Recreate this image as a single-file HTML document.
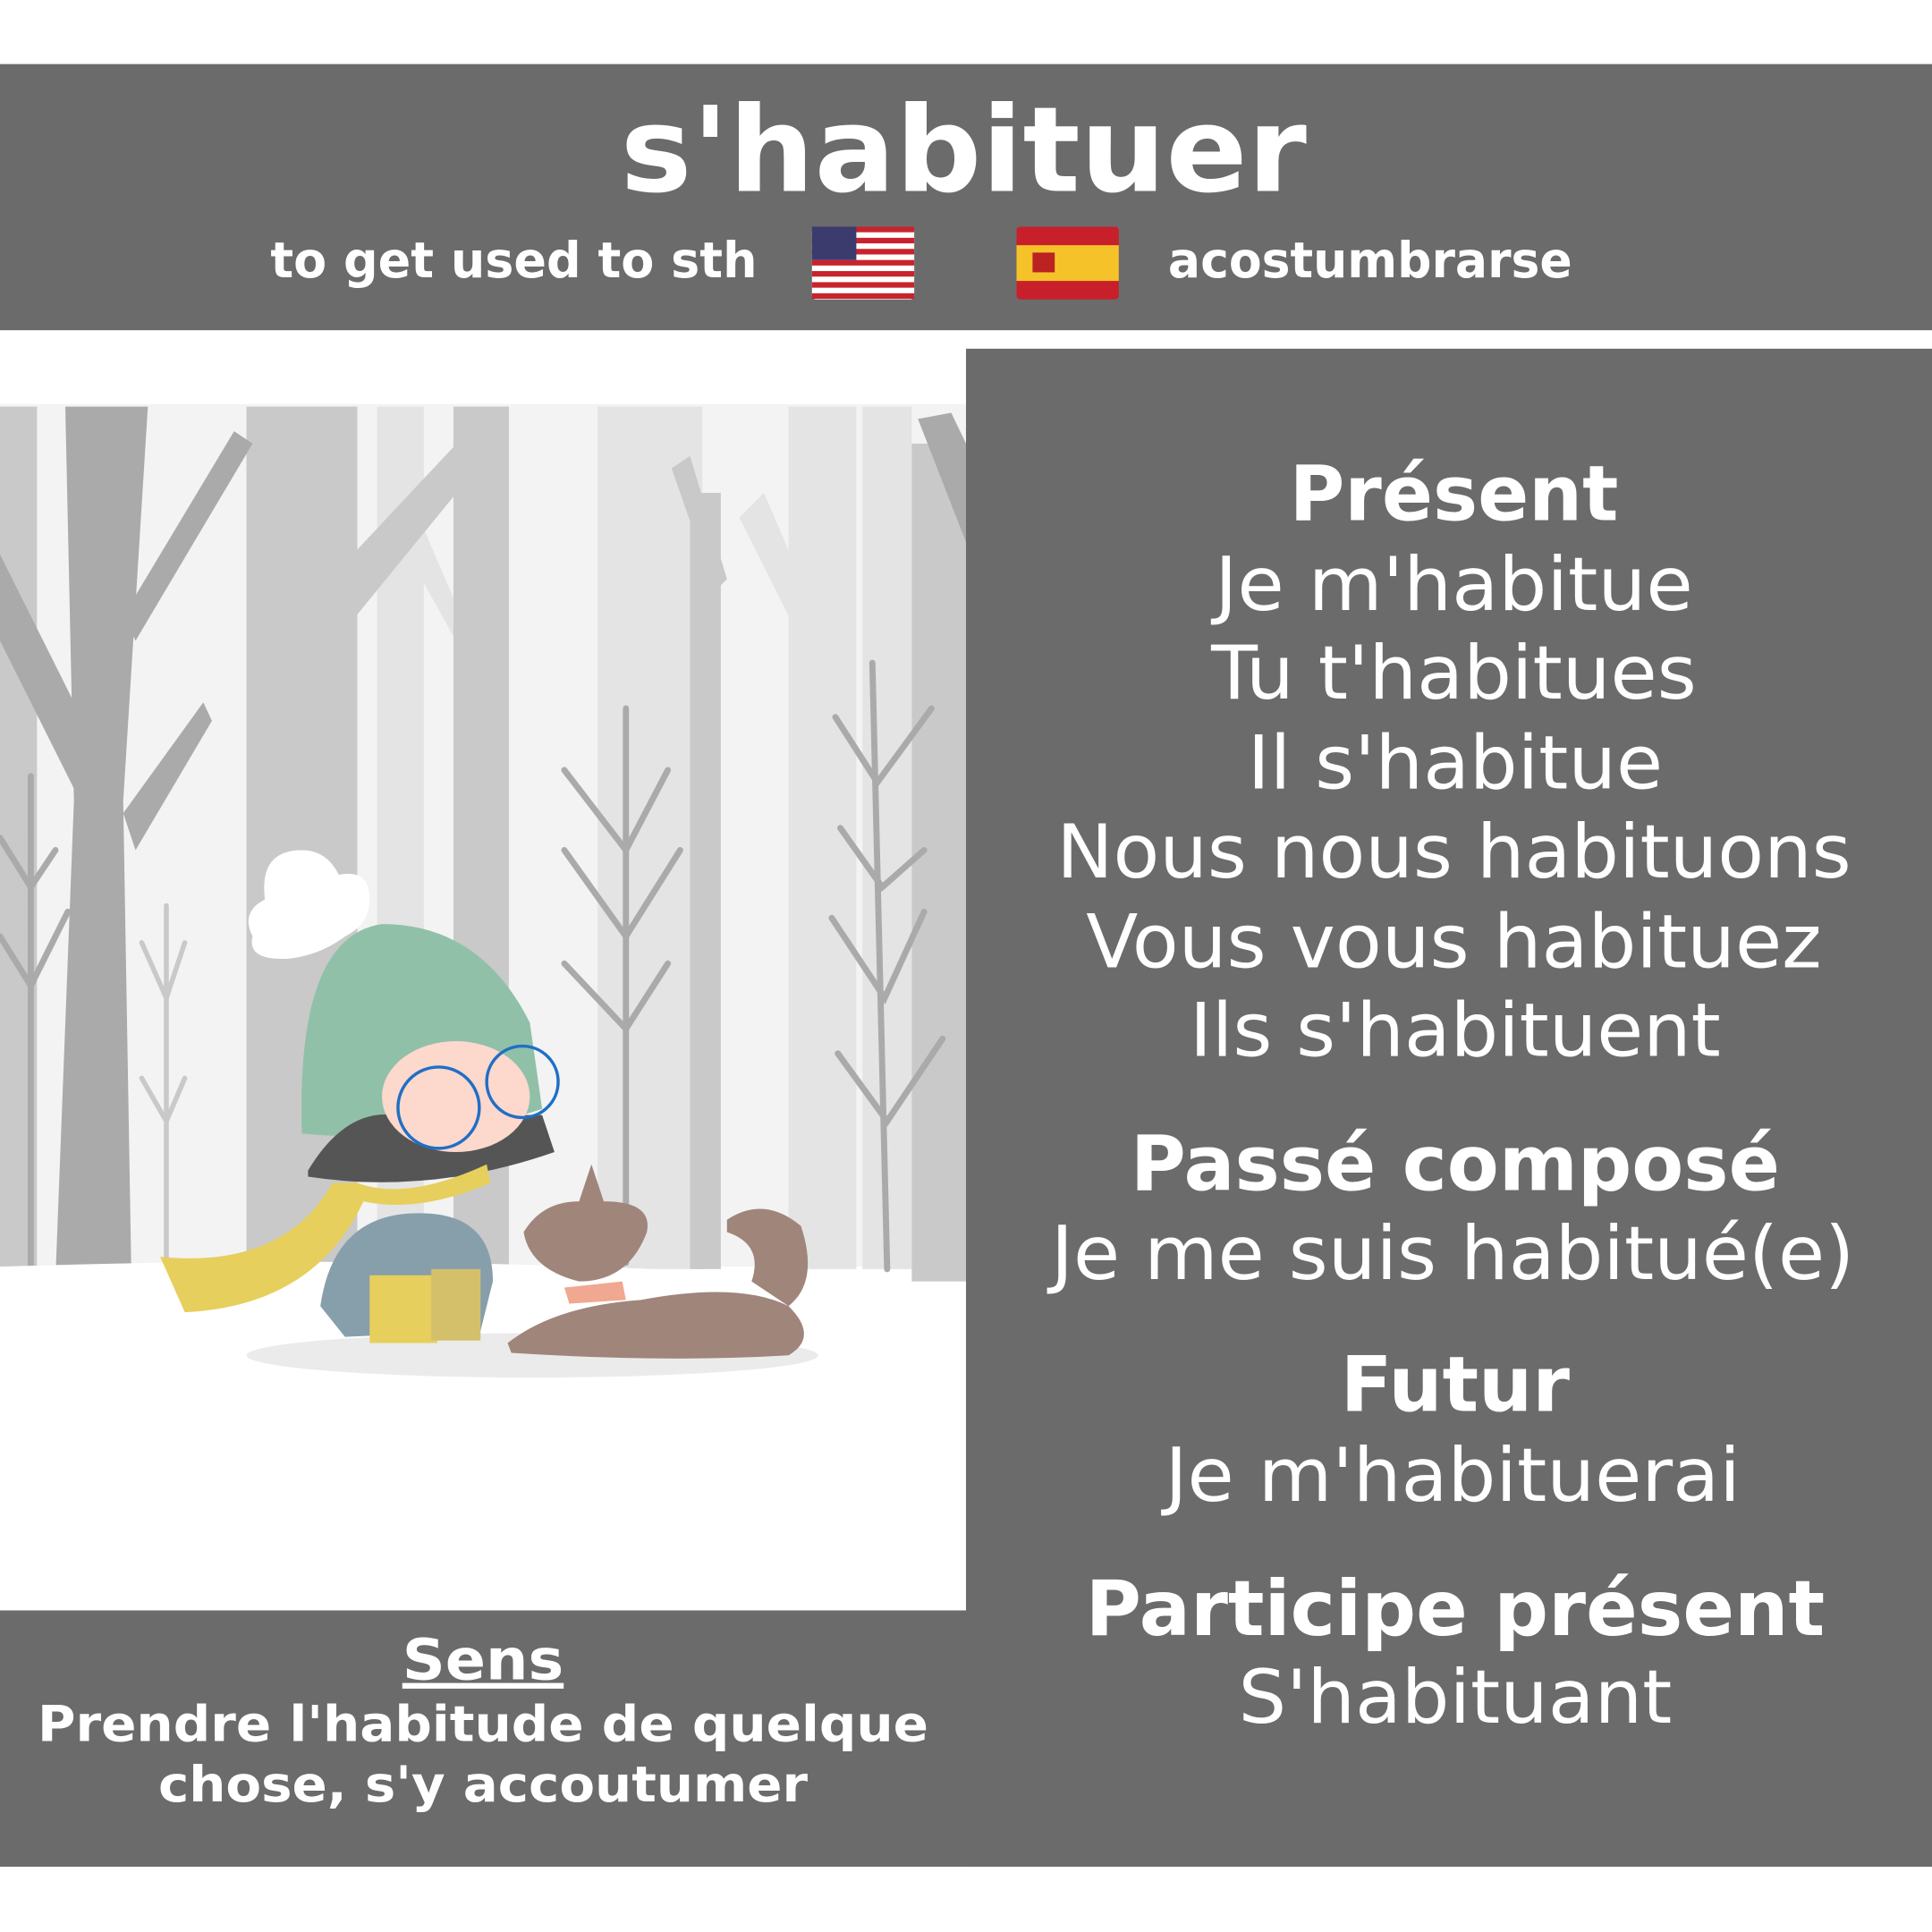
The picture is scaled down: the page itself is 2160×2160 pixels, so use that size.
<!DOCTYPE html>
<html><head><meta charset="utf-8"><style>
html,body{margin:0;padding:0;background:#fff}
svg{display:block}
text{font-family:"DejaVu Sans","Liberation Sans",sans-serif;fill:#fff}
.b{font-weight:bold}
</style></head><body>
<svg width="2160" height="2160" viewBox="0 0 1568 1568" xmlns="http://www.w3.org/2000/svg">
<rect width="1568" height="1568" fill="#fff"/>
<!-- header -->
<rect x="0" y="52" width="1568" height="216" fill="#6b6b6b"/>
<text class="b" x="782" y="155" font-size="96" text-anchor="middle" textLength="557" lengthAdjust="spacingAndGlyphs">s'habituer</text>
<text class="b" x="417" y="225" font-size="40" text-anchor="middle" textLength="395" lengthAdjust="spacingAndGlyphs">to get used to sth</text>
<text class="b" x="1112" y="225" font-size="40" text-anchor="middle" textLength="328" lengthAdjust="spacingAndGlyphs">acostumbrarse</text>
<!-- US flag -->
<g>
<rect x="659" y="184" width="83" height="59" rx="3" fill="#fff"/>
<g fill="#c8232c">
<rect x="659" y="184" width="83" height="4.5"/><rect x="659" y="193" width="83" height="4.5"/><rect x="659" y="202" width="83" height="4.5"/><rect x="659" y="211" width="83" height="4.5"/><rect x="659" y="220" width="83" height="4.5"/><rect x="659" y="229" width="83" height="4.5"/><rect x="659" y="238" width="83" height="4.5"/>
</g>
<rect x="659" y="184" width="36" height="27" fill="#3c3b6e"/>
</g>
<!-- Spain flag -->
<rect x="825" y="184" width="83" height="59" rx="3" fill="#c8202a"/>
<rect x="825" y="199" width="83" height="29" fill="#f6c22a"/>
<rect x="838" y="205" width="18" height="16" fill="#b22" />
<!-- illustration -->
<rect x="0" y="328" width="784" height="979" fill="#fff"/>
<rect x="0" y="328" width="784" height="700" fill="#f3f3f3"/>
<g fill="#e4e4e4">
<rect x="306" y="330" width="38" height="700"/>
<rect x="485" y="330" width="85" height="700"/>
<rect x="640" y="330" width="55" height="700"/>
<rect x="700" y="330" width="40" height="700"/>
<polygon points="320,430 340,420 370,490 370,520"/>
<polygon points="600,420 620,400 650,470 640,500"/>
</g>
<g fill="#c9c9c9">
<rect x="200" y="330" width="90" height="700"/>
<rect x="368" y="330" width="45" height="700"/>
<rect x="560" y="400" width="25" height="630"/>
<rect x="740" y="360" width="44" height="680"/>
<rect x="0" y="330" width="30" height="700"/>
<polygon points="200,540 230,510 380,350 395,370 240,560"/>
<polygon points="545,380 560,370 590,470 580,480"/>
</g>
<g fill="#aaaaaa">
<polygon points="53,330 120,330 100,650 108,1115 42,1115 60,650"/>
<polygon points="0,450 60,570 60,640 0,520"/>
<polygon points="100,500 190,350 205,360 110,520"/>
<polygon points="100,660 165,570 172,585 110,690"/>
<polygon points="745,340 772,335 784,360 784,440"/>
</g>
<g stroke="#aaaaaa" stroke-width="5" fill="none" stroke-linecap="round">
<path d="M508 575 V1025 M458 625 L508 690 L542 625 M458 690 L508 760 L552 690 M458 782 L508 835 L542 782"/>
<path d="M708 538 L720 1030 M678 582 L712 635 L756 575 M682 672 L716 720 L750 690 M675 745 L718 810 L750 740 M680 855 L720 910 L765 843"/>
<path d="M25 630 V1090 M0 680 L25 720 L45 690 M0 760 L25 800 L55 740"/>
</g>
<g stroke="#c9c9c9" stroke-width="4" fill="none" stroke-linecap="round">
<path d="M135 735 V1045 M115 765 L135 810 L150 765 M115 875 L135 910 L150 875"/>
</g>
<path d="M0 1028 Q400 1015 784 1045 V1307 H0Z" fill="#fff"/>
<ellipse cx="432" cy="1100" rx="232" ry="18" fill="#ebebeb"/>
<!-- cloud -->
<path d="M215 730 Q210 690 245 690 Q265 690 275 710 Q300 705 300 730 Q300 750 280 760 Q260 775 235 778 Q200 780 205 760 Q195 740 215 730Z" fill="#fff"/>
<!-- girl -->
<path d="M245 920 Q240 760 310 750 Q390 750 430 830 L440 900 Q350 930 245 920Z" fill="#91c0a9"/>
<path d="M250 950 Q280 900 320 905 L440 905 L450 935 Q350 970 250 955Z" fill="#555"/>
<ellipse cx="370" cy="890" rx="60" ry="45" fill="#fcd8cd"/>
<circle cx="356" cy="899" r="33" fill="none" stroke="#1f6fc5" stroke-width="2.5"/>
<circle cx="424" cy="878" r="29" fill="none" stroke="#1f6fc5" stroke-width="2.5"/>
<path d="M290 960 Q330 975 395 945 L398 960 Q340 985 295 975 Q255 1060 150 1065 L130 1020 Q230 1030 270 960Z" fill="#e6cf5c"/>
<path d="M260 1060 Q270 990 330 985 Q400 980 400 1040 L390 1080 L280 1085Z" fill="#879faa"/>
<rect x="300" y="1035" width="55" height="55" fill="#e6cf5c"/>
<rect x="350" y="1030" width="40" height="58" fill="#d4c06a"/>
<!-- dog -->
<path d="M412 1090 Q450 1060 520 1055 Q600 1040 640 1060 Q665 1085 640 1100 Q540 1106 415 1098Z" fill="#a0857a"/>
<path d="M425 1000 Q440 975 470 975 L480 945 L490 975 Q530 975 525 1000 Q510 1040 470 1040 Q430 1030 425 1000Z" fill="#a0857a"/>
<path d="M590 990 Q620 970 650 995 Q665 1040 640 1060 L610 1040 Q620 1010 590 1000Z" fill="#a0857a"/>
<path d="M458 1045 L505 1040 L508 1055 L462 1058Z" fill="#f0a890"/>
<!-- right panel -->
<rect x="784" y="283" width="784" height="1232" fill="#6b6b6b"/>
<rect x="0" y="1307" width="1568" height="208" fill="#6b6b6b"/>
<g text-anchor="middle">
<text class="b" x="1180" y="422" font-size="62" textLength="267" lengthAdjust="spacingAndGlyphs">Présent</text>
<text x="1180" y="495" font-size="60" textLength="388" lengthAdjust="spacingAndGlyphs">Je m'habitue</text>
<text x="1180" y="567" font-size="60" textLength="394" lengthAdjust="spacingAndGlyphs">Tu t'habitues</text>
<text x="1181" y="640" font-size="60" textLength="337" lengthAdjust="spacingAndGlyphs">Il s'habitue</text>
<text x="1180" y="712" font-size="60" textLength="645" lengthAdjust="spacingAndGlyphs">Nous nous habituons</text>
<text x="1180" y="785" font-size="60" textLength="597" lengthAdjust="spacingAndGlyphs">Vous vous habituez</text>
<text x="1181" y="857" font-size="60" textLength="431" lengthAdjust="spacingAndGlyphs">Ils s'habituent</text>
<text class="b" x="1181" y="966" font-size="62" textLength="527" lengthAdjust="spacingAndGlyphs">Passé composé</text>
<text x="1179" y="1038" font-size="60" textLength="652" lengthAdjust="spacingAndGlyphs">Je me suis habitué(e)</text>
<text class="b" x="1181" y="1145" font-size="62" textLength="186" lengthAdjust="spacingAndGlyphs">Futur</text>
<text x="1179" y="1218" font-size="60" textLength="467" lengthAdjust="spacingAndGlyphs">Je m'habituerai</text>
<text class="b" x="1181" y="1327" font-size="62" textLength="600" lengthAdjust="spacingAndGlyphs">Participe présent</text>
<text x="1181" y="1398" font-size="60" textLength="352" lengthAdjust="spacingAndGlyphs">S'habituant</text>
<text class="b" x="392" y="1363" font-size="46" textLength="131" lengthAdjust="spacingAndGlyphs" text-decoration="underline">Sens</text>
<text class="b" x="392" y="1413" font-size="40" textLength="723" lengthAdjust="spacingAndGlyphs">Prendre l'habitude de quelque</text>
<text class="b" x="392" y="1462" font-size="40" textLength="527" lengthAdjust="spacingAndGlyphs">chose, s'y accoutumer</text>
</g>
<rect x="391" y="1365" width="0" height="0"/>
</svg>
</body></html>
